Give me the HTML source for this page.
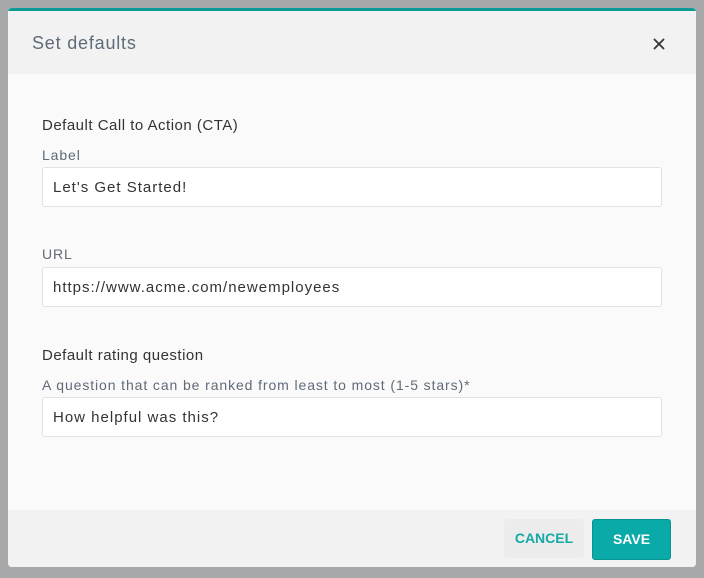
<!DOCTYPE html><html><head><style>
body{margin:0;width:704px;height:578px;background:#a7a8aa;font-family:"Liberation Sans",sans-serif;position:relative;overflow:hidden}
.m{position:absolute;left:8px;top:8px;width:688px;height:559px;background:#fafafa;border-radius:4px;overflow:hidden}
.top{height:3px;background:#0b9a94}
.hd{height:63px;background:#f2f2f2;position:relative}
.hd span{position:absolute;left:24px;top:22px;font-size:18px;color:#5f6b78;letter-spacing:0.8px}
.x{position:absolute;left:644px;top:26px;width:14px;height:14px}
.t{position:absolute;left:34px;font-size:15px;color:#333;letter-spacing:0.5px}
.l{position:absolute;left:34px;font-size:14px;color:#5f6b78;letter-spacing:0.9px}
.i{position:absolute;left:34px;width:618px;height:38px;border:1px solid #e2e2e2;background:#fff;border-radius:3px;box-sizing:content-box}
.i span{position:absolute;left:10px;top:11px;font-size:15px;color:#333;letter-spacing:1px}
.ft{position:absolute;left:0;top:502px;width:688px;height:57px;background:#f2f2f2}
.b{position:absolute;top:9px;height:39px;border-radius:3px;font-weight:bold;font-size:14px;text-align:center;line-height:39px}
</style></head><body><div class="m">
<div class="top"></div>
<div class="hd"><span>Set defaults</span>
<svg class="x" viewBox="0 0 14 14"><path d="M2 2L12 12M12 2L2 12" stroke="#333" stroke-width="1.8"/></svg></div>
<div class="t" style="top:109px">Default Call to Action (CTA)</div>
<div class="l" style="top:139px">Label</div>
<div class="i" style="top:159px"><span>Let's Get Started!</span></div>
<div class="l" style="top:238px">URL</div>
<div class="i" style="top:259px"><span>https://www.acme.com/newemployees</span></div>
<div class="t" style="top:339px">Default rating question</div>
<div class="l" style="top:369px">A question that can be ranked from least to most (1-5 stars)*</div>
<div class="i" style="top:389px"><span>How helpful was this?</span></div>
<div class="ft">
<div class="b" style="left:496px;width:80px;background:#ececec;color:#16a9a6">CANCEL</div>
<div class="b" style="left:584px;width:77px;background:#09aaa8;color:#fff;border:1px solid #079591">SAVE</div>
</div></div></body></html>
